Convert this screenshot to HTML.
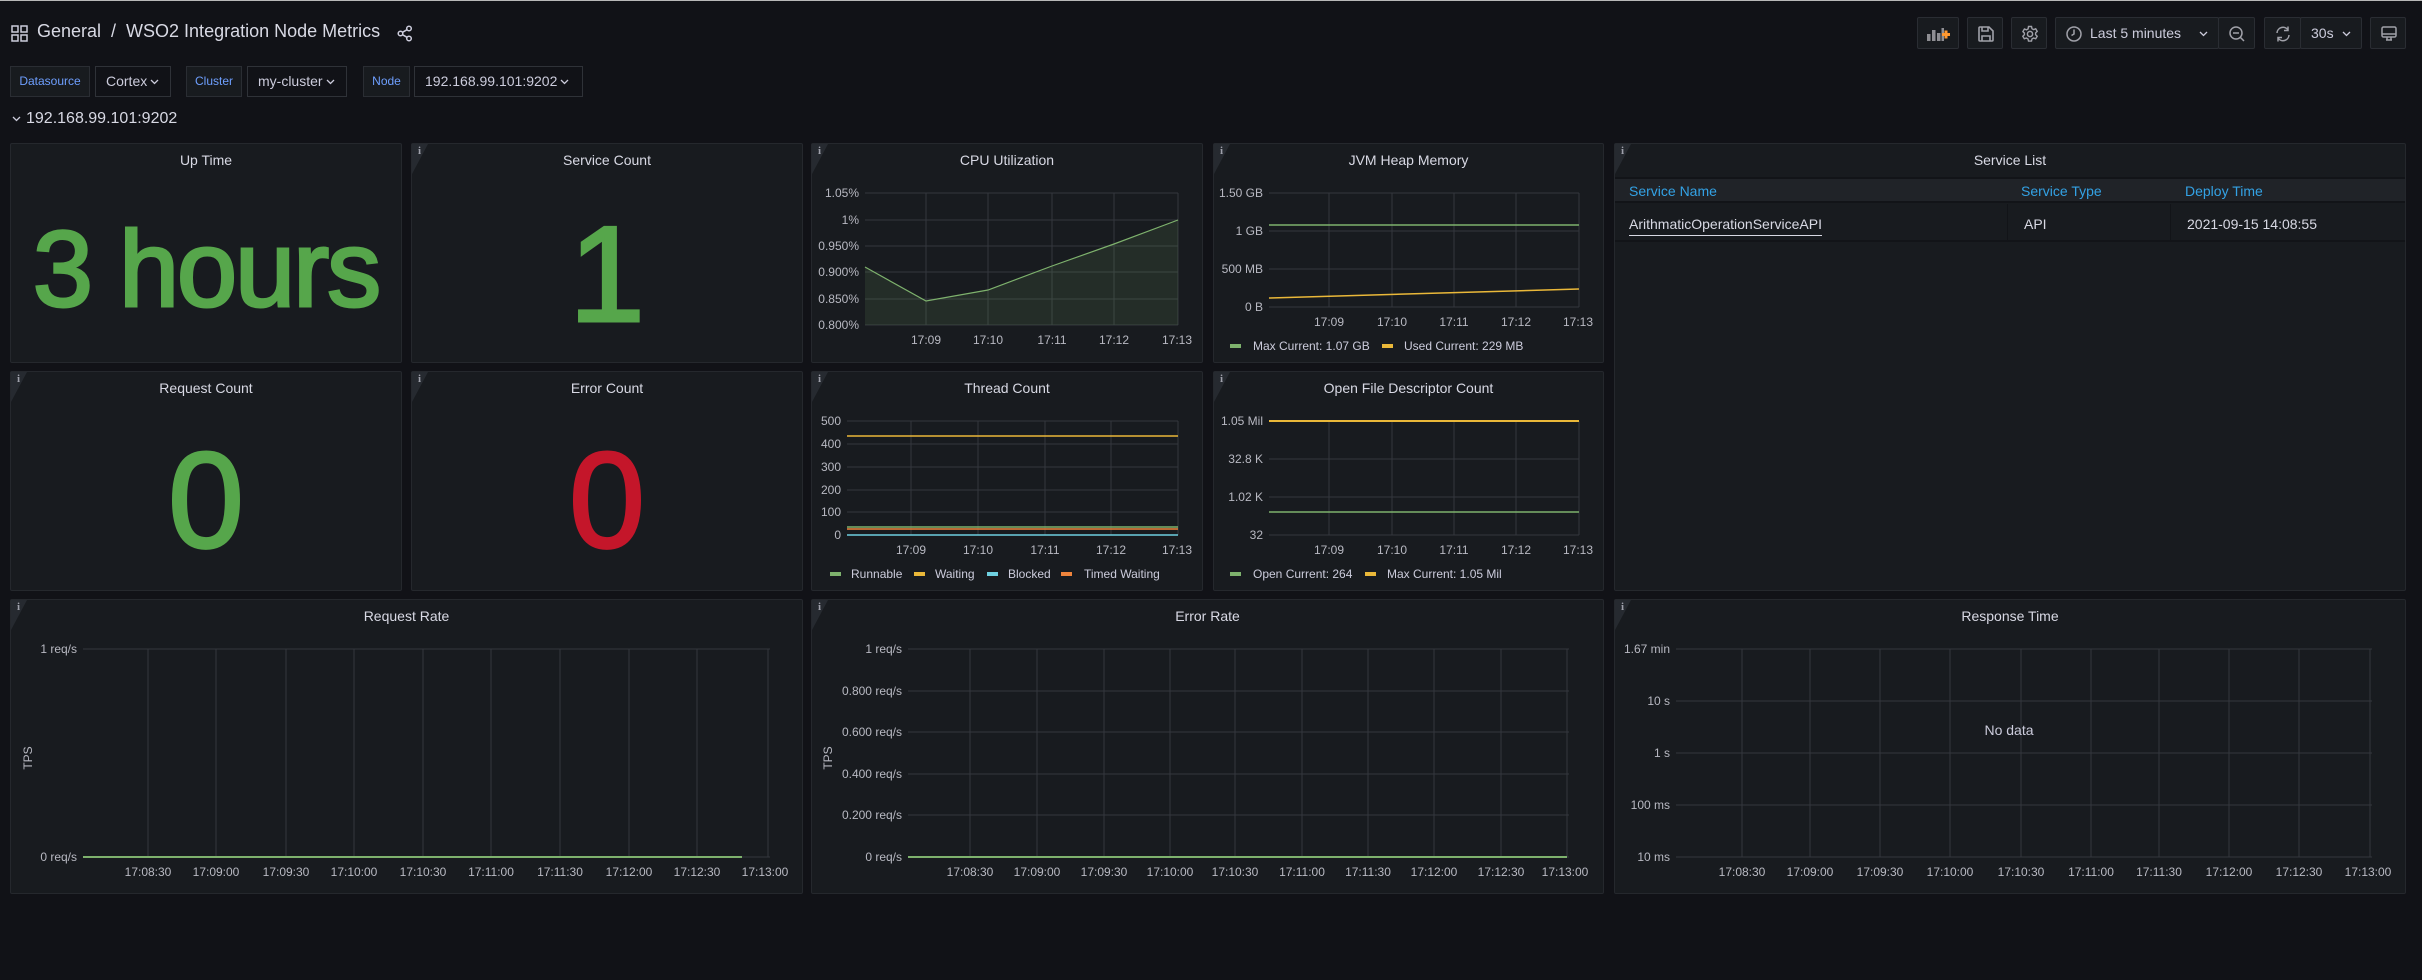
<!DOCTYPE html>
<html><head><meta charset="utf-8">
<style>
*{box-sizing:border-box;margin:0;padding:0}
body{width:2422px;height:980px;background:#111217;font-family:"Liberation Sans",sans-serif;color:#ccccdc;position:relative;overflow:hidden}
.topline{position:absolute;left:0;top:0;width:2422px;height:1px;background:#b8b8b8}
.abs{position:absolute}
.panel{position:absolute;background:#181b1f;border:1px solid #25282d;border-radius:2px}
.ptitle{position:absolute;left:0;right:0;top:8px;text-align:center;font-size:14px;color:#d8d9e4}
.info{position:absolute;left:0;top:0;width:0;height:0;border-top:30px solid #262a30;border-right:16px solid transparent}
.info span{position:absolute;left:6px;top:-29px;font-family:"Liberation Serif",serif;font-weight:bold;font-size:11px;color:#9fa1ab}
.btn{position:absolute;top:17px;height:32px;background:#181b1f;border:1px solid #2a2d33;border-radius:2px}
.vlab{position:absolute;top:66px;height:31px;border:1px solid #2a2d33;background:#181b1f;font-size:12px;color:#6e9fff;line-height:29px;text-align:center}
.vval{position:absolute;top:66px;height:31px;border:1px solid #2f3238;background:#111217;font-size:14px;color:#ccccdc;line-height:29px;padding-left:10px}
.vval svg{vertical-align:middle;margin-left:3px}
.big{position:absolute;left:0;right:0;text-align:center;color:#56a64b;-webkit-text-stroke:3px #56a64b}
svg text{font-family:"Liberation Sans",sans-serif}
</style></head><body>
<div class="topline"></div>

<!-- header -->
<svg class="abs" style="left:11px;top:25px" width="17" height="17" viewBox="0 0 17 17"><g fill="none" stroke="#ccccdc" stroke-width="1.5"><rect x="1" y="1" width="6" height="6"/><rect x="10" y="1" width="6" height="6"/><rect x="1" y="10" width="6" height="6"/><rect x="10" y="10" width="6" height="6"/></g></svg>
<div class="abs" style="left:37px;top:21px;font-size:18px;color:#d8d9e4;white-space:nowrap">General &nbsp;/&nbsp; WSO2 Integration Node Metrics</div>
<svg class="abs" style="left:397px;top:25px" width="16" height="17" viewBox="0 0 16 17"><g fill="none" stroke="#ccccdc" stroke-width="1.5"><circle cx="12" cy="3.5" r="2.3"/><circle cx="3.5" cy="8.5" r="2.3"/><circle cx="12" cy="13.5" r="2.3"/><path d="M5.5 7.3L10 4.7M5.5 9.7L10 12.3"/></g></svg>

<div class="btn" style="left:1917px;width:42px"><svg style="position:absolute;left:8px;top:7px" width="26" height="18"><g fill="#8e8e93"><rect x="1" y="9" width="3.5" height="7"/><rect x="6" y="5" width="3.5" height="11"/><rect x="11" y="8" width="3.5" height="8"/><rect x="15.5" y="3" width="2.5" height="13"/></g><path d="M16 9.5h8M20 5.5v8" stroke="#ff9830" stroke-width="3"/></svg></div>
<div class="btn" style="left:1967px;width:36px"><svg style="position:absolute;left:9px;top:7px" width="18" height="18"><path d="M3 2h9l4 4v9a1 1 0 0 1-1 1H3a1 1 0 0 1-1-1V3a1 1 0 0 1 1-1zM5 2v4h6V2M5 16v-5h8v5" fill="none" stroke="#a0a1a9" stroke-width="1.6"/></svg></div>
<div class="btn" style="left:2011px;width:36px"><svg style="position:absolute;left:9px;top:7px" width="18" height="18" viewBox="0 0 18 18"><circle cx="9" cy="9" r="2.6" fill="none" stroke="#a0a1a9" stroke-width="1.5"/><path d="M7.5 1.5h3l.5 2.2 1.6.9 2.1-.8 1.5 2.6-1.6 1.5v1.8l1.6 1.5-1.5 2.6-2.1-.8-1.6.9-.5 2.2h-3l-.5-2.2-1.6-.9-2.1.8-1.5-2.6 1.6-1.5V8.1L1.9 6.6l1.5-2.6 2.1.8 1.6-.9z" fill="none" stroke="#a0a1a9" stroke-width="1.4"/></svg></div>
<div class="btn" style="left:2055px;width:164px"><svg style="position:absolute;left:9px;top:7px" width="18" height="18"><circle cx="9" cy="9" r="7" fill="none" stroke="#a0a1a9" stroke-width="1.5"/><path d="M9 4.5V9L6.5 10.5" fill="none" stroke="#a0a1a9" stroke-width="1.5"/></svg><span style="position:absolute;left:34px;top:7px;font-size:14px;color:#ccccdc">Last 5 minutes</span><svg style="position:absolute;left:143px;top:13px" width="9" height="6"><path d="M1 1l3.5 3.5L8 1" fill="none" stroke="#ccccdc" stroke-width="1.3"/></svg></div>
<div class="btn" style="left:2218px;width:37px"><svg style="position:absolute;left:9px;top:7px" width="18" height="18"><circle cx="8" cy="8" r="6" fill="none" stroke="#a0a1a9" stroke-width="1.5"/><path d="M5 8h6M12.5 12.5L16 16" stroke="#a0a1a9" stroke-width="1.5"/></svg></div>
<div class="btn" style="left:2264px;width:37px"><svg style="position:absolute;left:9px;top:7px" width="18" height="18"><path d="M3 8a6 6 0 0 1 11-3M15 10a6 6 0 0 1-11 3" fill="none" stroke="#a0a1a9" stroke-width="1.5"/><path d="M14 1.5v4h-4M4 16.5v-4h4" fill="none" stroke="#a0a1a9" stroke-width="1.5"/></svg></div>
<div class="btn" style="left:2300px;width:62px"><span style="position:absolute;left:10px;top:7px;font-size:14px">30s</span><svg style="position:absolute;left:41px;top:13px" width="9" height="6"><path d="M1 1l3.5 3.5L8 1" fill="none" stroke="#ccccdc" stroke-width="1.3"/></svg></div>
<div class="btn" style="left:2370px;width:36px"><svg style="position:absolute;left:9px;top:7px" width="18" height="18"><rect x="2" y="2" width="14" height="10" rx="1.5" fill="none" stroke="#a0a1a9" stroke-width="1.5"/><path d="M2 9h14M6 15h6M7 12v3M11 12v3" stroke="#a0a1a9" stroke-width="1.5"/></svg></div>

<!-- variables -->
<div class="vlab" style="left:10px;width:80px">Datasource</div>
<div class="vval" style="left:95px;width:76px">Cortex<svg width="9" height="6"><path d="M1 1l3.5 3.5L8 1" fill="none" stroke="#ccccdc" stroke-width="1.3"/></svg></div>
<div class="vlab" style="left:186px;width:56px">Cluster</div>
<div class="vval" style="left:247px;width:100px">my-cluster<svg width="9" height="6"><path d="M1 1l3.5 3.5L8 1" fill="none" stroke="#ccccdc" stroke-width="1.3"/></svg></div>
<div class="vlab" style="left:363px;width:47px">Node</div>
<div class="vval" style="left:414px;width:169px">192.168.99.101:9202<svg width="9" height="6"><path d="M1 1l3.5 3.5L8 1" fill="none" stroke="#ccccdc" stroke-width="1.3"/></svg></div>

<svg class="abs" style="left:12px;top:116px" width="9" height="6"><path d="M1 1l3.5 3.5L8 1" fill="none" stroke="#ccccdc" stroke-width="1.3"/></svg>
<div class="abs" style="left:26px;top:110px;font-size:16px;color:#d8d9e4">192.168.99.101:9202</div>

<!-- stat panels -->
<div class="panel" style="left:10px;top:143px;width:392px;height:220px"><div class="ptitle">Up Time</div><div class="big" style="top:62px;font-size:108px;letter-spacing:-2px">3 hours</div></div>
<div class="panel" style="left:411px;top:143px;width:392px;height:220px"><div class="info"><span>i</span></div><div class="ptitle">Service Count</div><div class="big" style="top:52px;font-size:136px">1</div></div>
<div class="panel" style="left:10px;top:371px;width:392px;height:220px"><div class="info"><span>i</span></div><div class="ptitle">Request Count</div><div class="big" style="top:50px;font-size:136px">0</div></div>
<div class="panel" style="left:411px;top:371px;width:392px;height:220px"><div class="info"><span>i</span></div><div class="ptitle">Error Count</div><div class="big" style="top:50px;font-size:136px;color:#c4162a;-webkit-text-stroke:3px #c4162a">0</div></div>

<div class="panel" style="left:811px;top:143px;width:392px;height:220px"><div class="info"><span>i</span></div><div class="ptitle">CPU Utilization</div></div>
<div class="panel" style="left:1213px;top:143px;width:391px;height:220px"><div class="info"><span>i</span></div><div class="ptitle">JVM Heap Memory</div></div>
<div class="panel" style="left:811px;top:371px;width:392px;height:220px"><div class="info"><span>i</span></div><div class="ptitle">Thread Count</div></div>
<div class="panel" style="left:1213px;top:371px;width:391px;height:220px"><div class="info"><span>i</span></div><div class="ptitle">Open File Descriptor Count</div></div>

<!-- service list -->
<div class="panel" style="left:1614px;top:143px;width:792px;height:448px"><div class="info"><span>i</span></div><div class="ptitle">Service List</div>
 <div class="abs" style="left:0;right:0;top:33px;height:26px;background:#202328;border-top:2px solid #121418;border-bottom:2px solid #121418"></div>
 <div class="abs" style="left:14px;top:39px;font-size:14px;color:#33a2e5">Service Name</div>
 <div class="abs" style="left:406px;top:39px;font-size:14px;color:#33a2e5">Service Type</div>
 <div class="abs" style="left:570px;top:39px;font-size:14px;color:#33a2e5">Deploy Time</div>
 <div class="abs" style="left:392px;top:60px;width:1px;height:36px;background:#121418"></div>
 <div class="abs" style="left:555px;top:60px;width:1px;height:36px;background:#121418"></div>
 <div class="abs" style="left:0;right:0;top:96px;height:2px;background:#121418"></div>
 <div class="abs" style="left:14px;top:72px;font-size:14px;color:#d8d9e4;border-bottom:1px solid #d8d9e4;padding-bottom:3px">ArithmaticOperationServiceAPI</div>
 <div class="abs" style="left:409px;top:72px;font-size:14px;color:#d8d9e4">API</div>
 <div class="abs" style="left:572px;top:72px;font-size:14px;color:#d8d9e4">2021-09-15 14:08:55</div>
</div>

<!-- bottom panels -->
<div class="panel" style="left:10px;top:599px;width:793px;height:295px"><div class="info"><span>i</span></div><div class="ptitle">Request Rate</div></div>
<div class="panel" style="left:811px;top:599px;width:793px;height:295px"><div class="info"><span>i</span></div><div class="ptitle">Error Rate</div></div>
<div class="panel" style="left:1614px;top:599px;width:792px;height:295px"><div class="info"><span>i</span></div><div class="ptitle">Response Time</div></div>

<svg class="abs" style="left:0;top:0" width="2422" height="980" font-size="12" fill="#b8b9c2">
<g stroke="#34373d" stroke-width="1">
 <path d="M865 193H1178M865 220H1178M865 246H1178M865 272H1178M865 299H1178M865 325H1178M926 193V325M988 193V325M1052 193V325M1114 193V325M1178 193V325"/>
 <path d="M1269 193H1579M1269 231H1579M1269 269H1579M1269 307H1579M1329 193V307M1392 193V307M1454 193V307M1516 193V307M1579 193V307"/>
 <path d="M847 421H1178M847 444H1178M847 467H1178M847 490H1178M847 512H1178M847 535H1178M911 421V535M978 421V535M1045 421V535M1111 421V535M1178 421V535"/>
 <path d="M1269 421H1579M1269 459H1579M1269 497H1579M1269 535H1579M1329 421V535M1392 421V535M1454 421V535M1516 421V535M1579 421V535"/>
 <path d="M83 649H770M83 857H770M148 649V857M216 649V857M286 649V857M354 649V857M423 649V857M491 649V857M560 649V857M629 649V857M697 649V857M768 649V857"/>
 <path d="M908 649H1569M908 691H1569M908 732H1569M908 774H1569M908 815H1569M908 857H1569M970 649V857M1037 649V857M1104 649V857M1170 649V857M1235 649V857M1302 649V857M1368 649V857M1434 649V857M1501 649V857M1567 649V857"/>
 <path d="M1676 649H2372M1676 701H2372M1676 753H2372M1676 805H2372M1676 857H2372M1742 649V857M1810 649V857M1880 649V857M1950 649V857M2021 649V857M2091 649V857M2159 649V857M2229 649V857M2299 649V857M2370 649V857"/>
</g>
<path d="M865 267L926 301L988 290L1052 266L1114 244L1178 220V325H865Z" fill="rgba(126,178,109,0.12)"/>
<path d="M865 267L926 301L988 290L1052 266L1114 244L1178 220" fill="none" stroke="#7eb26d" stroke-width="1.2"/>
<path d="M1269 225H1579" stroke="#7eb26d" stroke-width="1.5"/>
<path d="M1269 298L1579 289" stroke="#eab839" stroke-width="1.5"/>
<path d="M847 436H1178" stroke="#eab839" stroke-width="1.5"/>
<path d="M847 527H1178" stroke="#7eb26d" stroke-width="1.5"/>
<path d="M847 529H1178" stroke="#ef843c" stroke-width="1.5"/>
<path d="M847 535H1178" stroke="#6ed0e0" stroke-width="1.5"/>
<path d="M1269 421H1579" stroke="#eab839" stroke-width="2"/>
<path d="M1269 512H1579" stroke="#7eb26d" stroke-width="1.5"/>
<path d="M83 857H742" stroke="#7eb26d" stroke-width="2"/>
<path d="M908 857H1567" stroke="#7eb26d" stroke-width="2"/>

<g text-anchor="end">
 <text x="859" y="197">1.05%</text><text x="859" y="224">1%</text><text x="859" y="250">0.950%</text><text x="859" y="276">0.900%</text><text x="859" y="303">0.850%</text><text x="859" y="329">0.800%</text>
 <text x="1263" y="197">1.50 GB</text><text x="1263" y="235">1 GB</text><text x="1263" y="273">500 MB</text><text x="1263" y="311">0 B</text>
 <text x="841" y="425">500</text><text x="841" y="448">400</text><text x="841" y="471">300</text><text x="841" y="494">200</text><text x="841" y="516">100</text><text x="841" y="539">0</text>
 <text x="1263" y="425">1.05 Mil</text><text x="1263" y="463">32.8 K</text><text x="1263" y="501">1.02 K</text><text x="1263" y="539">32</text>
 <text x="77" y="653">1 req/s</text><text x="77" y="861">0 req/s</text>
 <text x="902" y="653">1 req/s</text><text x="902" y="695">0.800 req/s</text><text x="902" y="736">0.600 req/s</text><text x="902" y="778">0.400 req/s</text><text x="902" y="819">0.200 req/s</text><text x="902" y="861">0 req/s</text>
 <text x="1670" y="653">1.67 min</text><text x="1670" y="705">10 s</text><text x="1670" y="757">1 s</text><text x="1670" y="809">100 ms</text><text x="1670" y="861">10 ms</text>
</g>
<g text-anchor="middle">
 <text x="926" y="344">17:09</text><text x="988" y="344">17:10</text><text x="1052" y="344">17:11</text><text x="1114" y="344">17:12</text><text x="1177" y="344">17:13</text>
 <text x="1329" y="326">17:09</text><text x="1392" y="326">17:10</text><text x="1454" y="326">17:11</text><text x="1516" y="326">17:12</text><text x="1578" y="326">17:13</text>
 <text x="911" y="554">17:09</text><text x="978" y="554">17:10</text><text x="1045" y="554">17:11</text><text x="1111" y="554">17:12</text><text x="1177" y="554">17:13</text>
 <text x="1329" y="554">17:09</text><text x="1392" y="554">17:10</text><text x="1454" y="554">17:11</text><text x="1516" y="554">17:12</text><text x="1578" y="554">17:13</text>
 <text x="148" y="876">17:08:30</text><text x="216" y="876">17:09:00</text><text x="286" y="876">17:09:30</text><text x="354" y="876">17:10:00</text><text x="423" y="876">17:10:30</text><text x="491" y="876">17:11:00</text><text x="560" y="876">17:11:30</text><text x="629" y="876">17:12:00</text><text x="697" y="876">17:12:30</text><text x="765" y="876">17:13:00</text>
 <text x="970" y="876">17:08:30</text><text x="1037" y="876">17:09:00</text><text x="1104" y="876">17:09:30</text><text x="1170" y="876">17:10:00</text><text x="1235" y="876">17:10:30</text><text x="1302" y="876">17:11:00</text><text x="1368" y="876">17:11:30</text><text x="1434" y="876">17:12:00</text><text x="1501" y="876">17:12:30</text><text x="1565" y="876">17:13:00</text>
 <text x="1742" y="876">17:08:30</text><text x="1810" y="876">17:09:00</text><text x="1880" y="876">17:09:30</text><text x="1950" y="876">17:10:00</text><text x="2021" y="876">17:10:30</text><text x="2091" y="876">17:11:00</text><text x="2159" y="876">17:11:30</text><text x="2229" y="876">17:12:00</text><text x="2299" y="876">17:12:30</text><text x="2368" y="876">17:13:00</text>
 <text x="2009" y="735" font-size="14" fill="#ccccdc">No data</text>
 <text transform="translate(32 758) rotate(-90)">TPS</text>
 <text transform="translate(832 758) rotate(-90)">TPS</text>
</g>
<g fill="#ccccdc">
 <rect x="1230" y="344" width="11" height="4" fill="#7eb26d"/><text x="1253" y="350">Max  Current: 1.07 GB</text>
 <rect x="1382" y="344" width="11" height="4" fill="#eab839"/><text x="1404" y="350">Used  Current: 229 MB</text>
 <rect x="830" y="572" width="11" height="4" fill="#7eb26d"/><text x="851" y="578">Runnable</text>
 <rect x="914" y="572" width="11" height="4" fill="#eab839"/><text x="935" y="578">Waiting</text>
 <rect x="987" y="572" width="11" height="4" fill="#6ed0e0"/><text x="1008" y="578">Blocked</text>
 <rect x="1061" y="572" width="11" height="4" fill="#ef843c"/><text x="1084" y="578">Timed Waiting</text>
 <rect x="1230" y="572" width="11" height="4" fill="#7eb26d"/><text x="1253" y="578">Open  Current: 264</text>
 <rect x="1365" y="572" width="11" height="4" fill="#eab839"/><text x="1387" y="578">Max  Current: 1.05 Mil</text>
</g>
</svg>
</body></html>
